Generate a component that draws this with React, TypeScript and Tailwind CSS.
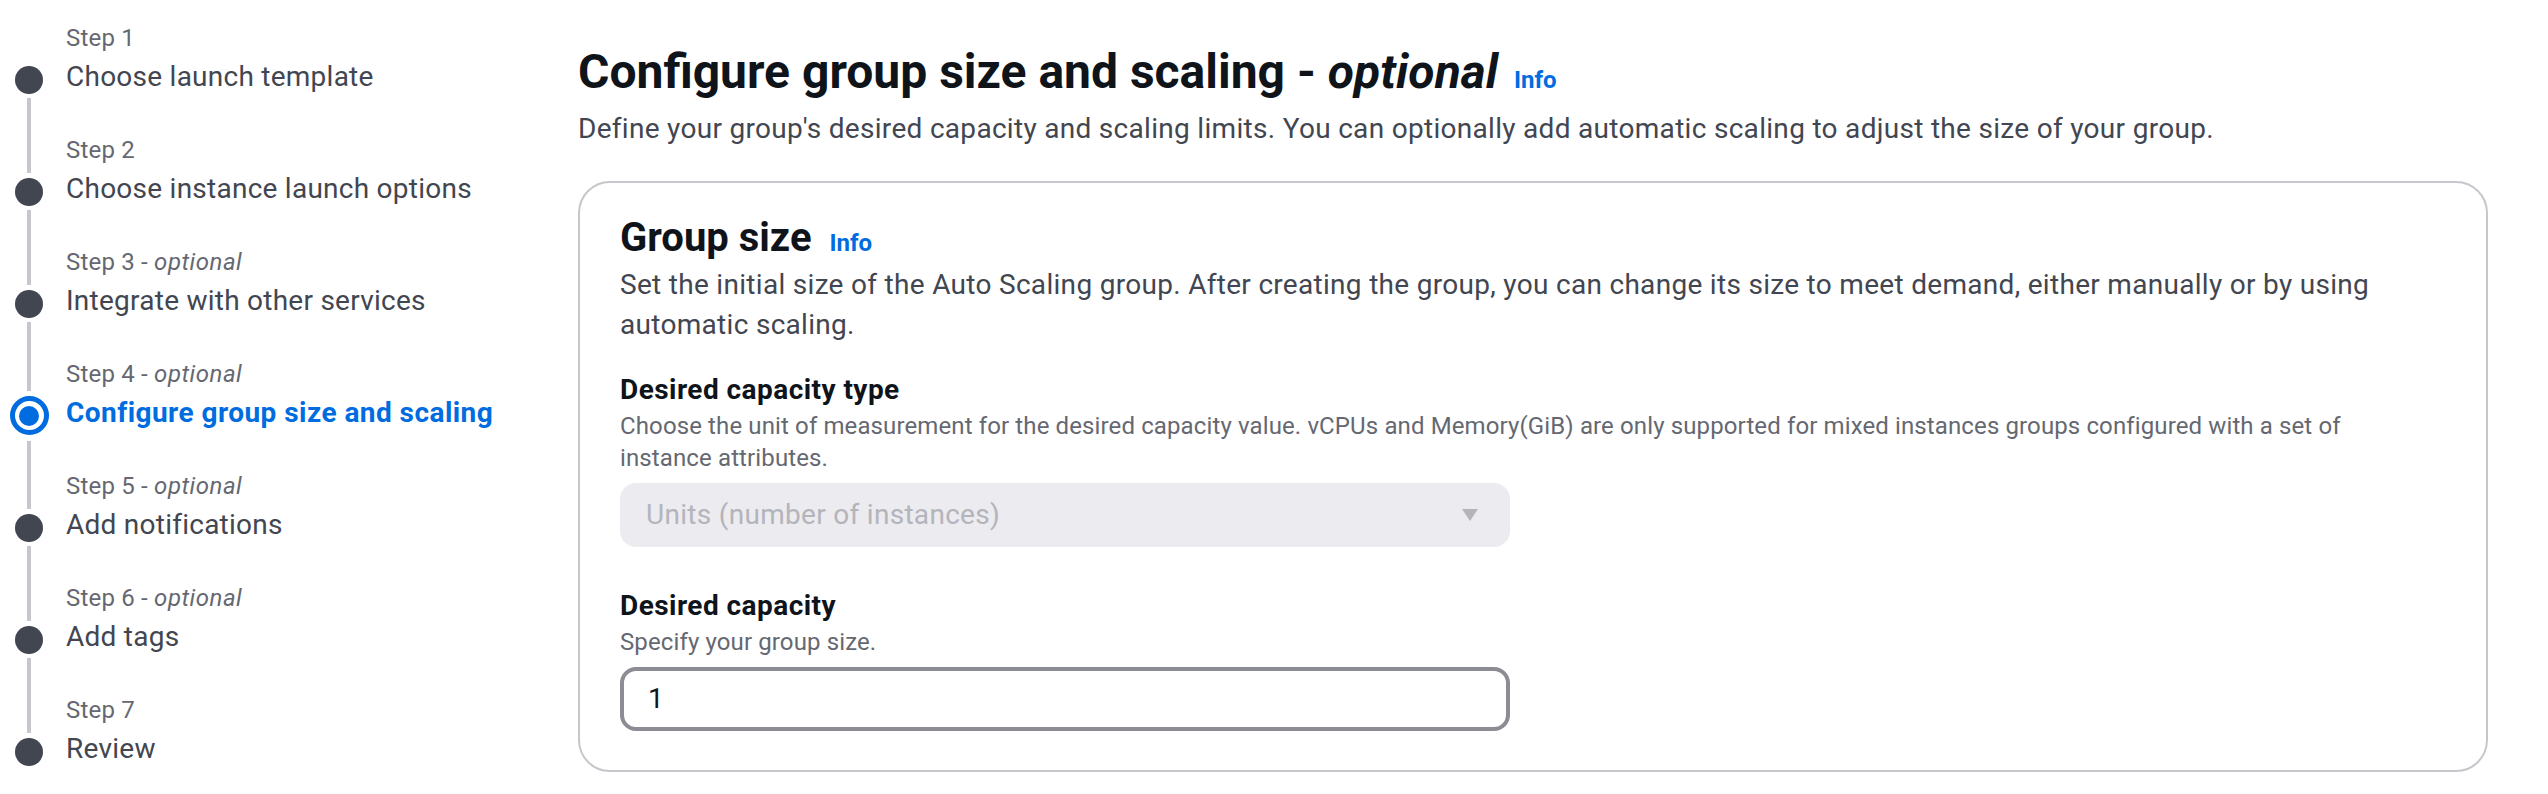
import React from "react";

type StepItem = {
  n: number;
  title: string;
  optional?: boolean;
  active?: boolean;
};

const steps: StepItem[] = [
  { n: 1, title: "Choose launch template" },
  { n: 2, title: "Choose instance launch options" },
  { n: 3, title: "Integrate with other services", optional: true },
  { n: 4, title: "Configure group size and scaling", optional: true, active: true },
  { n: 5, title: "Add notifications", optional: true },
  { n: 6, title: "Add tags", optional: true },
  { n: 7, title: "Review" },
];

function Step({ step, first, last }: { step: StepItem; first: boolean; last: boolean }) {
  return (
    <li className="flex">
      {/* marker column: line in, circle, line out */}
      <div className="flex w-[58px] shrink-0 flex-col items-center">
        {step.active ? (
          <>
            <div className="h-[33px] w-[4px] bg-[#c6c6cd]" />
            <div className="mt-[5px] flex size-[39px] items-center justify-center rounded-full border-[5px] border-[#006ce0]">
              <div className="size-[20px] rounded-full bg-[#006ce0]" />
            </div>
            {!last && <div className="mt-[6px] w-[4px] flex-1 bg-[#c6c6cd]" />}
          </>
        ) : (
          <>
            <div className={`h-[39px] w-[4px] ${first ? "" : "bg-[#c6c6cd]"}`} />
            <div className="mt-[5px] size-[28px] rounded-full bg-[#424650]" />
            {!last && <div className="mt-[4px] w-[4px] flex-1 bg-[#c6c6cd]" />}
          </>
        )}
      </div>
      <div className={`flex flex-col pl-[8px] ${last ? "" : "pb-[38px]"}`}>
        <span className="pt-[1px] text-[24px] leading-[31px] tracking-[0.2px] text-[#656871]">
          Step {step.n}
          {step.optional && (
            <>
              {" - "}
              <i className="tracking-[0.5px]">optional</i>
            </>
          )}
        </span>
        <a
          className={`mt-[4px] text-[28px] leading-[38px] whitespace-nowrap ${
            step.active ? "font-bold tracking-[0.45px] text-[#006ce0]" : "tracking-[0.25px] text-[#424650]"
          }`}
        >
          {step.title}
        </a>
      </div>
    </li>
  );
}

function Info() {
  return <a className="text-[24px] leading-[32px] font-bold tracking-normal text-[#006ce0]">Info</a>;
}

export default function App() {
  return (
    <div className="flex h-screen w-full overflow-hidden bg-white font-['Roboto',sans-serif]">
      <nav className="w-[578px] shrink-0 pt-[22px]">
        <ol>
          {steps.map((s, i) => (
            <Step key={s.n} step={s} first={i === 0} last={i === steps.length - 1} />
          ))}
        </ol>
      </nav>

      <main className="flex-1 pt-[42px] pr-[60px]">
        <h1 className="flex items-baseline gap-[16px] text-[48px] leading-[60px] font-bold text-[#0f141a]">
          <span>
            Configure group size and scaling - <i>optional</i>
          </span>
          <Info />
        </h1>
        <p className="mt-[7px] text-[28px] leading-[40px] tracking-[0.3px] text-[#424650]">
          Define your group's desired capacity and scaling limits. You can optionally add automatic scaling to adjust
          the size of your group.
        </p>

        <section className="mt-[32px] rounded-[32px] border-2 border-[#c6c6cd] px-[40px] pt-[31px] pb-[39px]">
          <h2 className="flex items-baseline gap-[18px] text-[40px] leading-[48px] font-bold text-[#0f141a]">
            Group size
            <Info />
          </h2>
          <p className="mt-[3px] text-[28px] leading-[40px] tracking-[0.3px] text-[#424650]">
            Set the initial size of the Auto Scaling group. After creating the group, you can change its size to meet
            demand, either manually or by using automatic scaling.
          </p>

          <div className="mt-[25px]">
            <label className="block text-[28px] leading-[40px] font-bold tracking-[0.45px] text-[#0f141a]">
              Desired capacity type
            </label>
            <p className="max-w-[1790px] text-[24px] leading-[32px] tracking-[0.12px] text-[#656871]">
              Choose the unit of measurement for the desired capacity value. vCPUs and Memory(GiB) are only supported
              for mixed instances groups configured with a set of instance attributes.
            </p>
            <div className="mt-[9px] flex h-[64px] w-[890px] items-center justify-between rounded-[16px] bg-[#ebebf0] pr-[24px] pl-[26px]">
              <span className="text-[28px] tracking-[0.3px] text-[#b4b4bb]">Units (number of instances)</span>
              <svg viewBox="0 0 16 16" className="size-[32px]">
                <path d="M4 5h8l-4 6z" fill="#b4b4bb" />
              </svg>
            </div>
          </div>

          <div className="mt-[39px]">
            <label className="block text-[28px] leading-[40px] font-bold tracking-[0.45px] text-[#0f141a]">
              Desired capacity
            </label>
            <p className="text-[24px] leading-[32px] tracking-[0.12px] text-[#656871]">Specify your group size.</p>
            <div className="mt-[9px] flex h-[64px] w-[890px] items-center rounded-[16px] border-4 border-[#8c8c94] px-[24px]">
              <span className="text-[28px] text-[#0f141a]">1</span>
            </div>
          </div>
        </section>
      </main>
    </div>
  );
}
